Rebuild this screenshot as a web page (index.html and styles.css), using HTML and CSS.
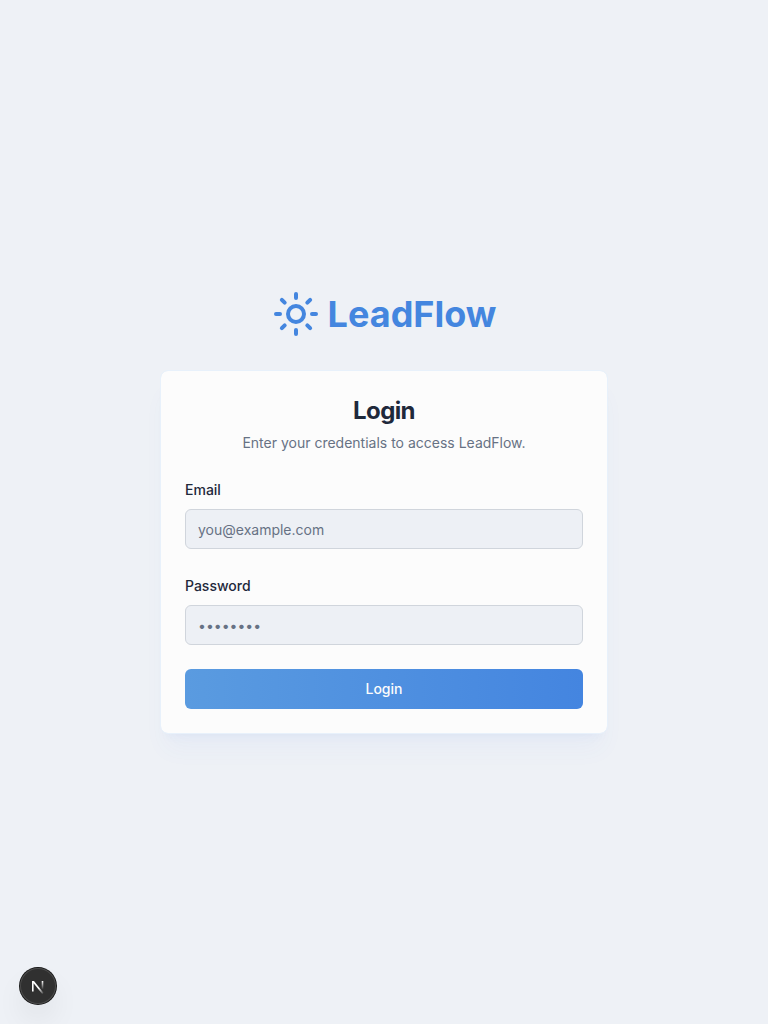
FILE: index.html
```html
<!DOCTYPE html>
<html lang="en">
<head>
<meta charset="utf-8">
<title>LeadFlow</title>
<link rel="stylesheet" href="styles.css">
</head>
<body>
<main class="page">
  <div class="brand">
    <svg class="brand-icon" viewBox="0 0 24 24" fill="none" stroke="currentColor" stroke-width="2" stroke-linecap="round" stroke-linejoin="round"><circle cx="12" cy="12" r="4"/><path d="M12 2v2M12 20v2M4.93 4.93l1.41 1.41M17.66 17.66l1.41 1.41M2 12h2M20 12h2M6.34 17.66l-1.41 1.41M19.07 4.93l-1.41 1.41"/></svg>
    <span class="brand-name">LeadFlow</span>
  </div>
  <section class="card">
    <h1 class="title">Login</h1>
    <p class="subtitle">Enter your credentials to access LeadFlow.</p>
    <form class="form">
      <div class="field"><label class="label" for="email">Email</label><input class="input" id="email" type="email" placeholder="you@example.com"></div>
      <div class="field"><label class="label" for="password">Password</label><input class="input" id="password" type="password" placeholder="••••••••"></div>
      <button class="submit" type="button">Login</button>
    </form>
  </section>
</main>
<div class="dev-badge">
  <svg width="36" height="36" viewBox="2 2 36 36" fill="none">
    <defs>
      <linearGradient id="diag" x1="21" y1="22" x2="26" y2="28" gradientUnits="userSpaceOnUse"><stop stop-color="#fff"/><stop offset="1" stop-color="#fff" stop-opacity="0"/></linearGradient>
      <linearGradient id="stem" x1="25" y1="15" x2="25" y2="23.5" gradientUnits="userSpaceOnUse"><stop stop-color="#fff"/><stop offset="1" stop-color="#fff" stop-opacity="0"/></linearGradient>
    </defs>
    <path d="M14 25.5V15h2l9.6 12-1.4 1-8.6-10.8v8.3z" fill="url(#diag)"/>
    <path d="M24.5 15v8.5" stroke="url(#stem)" stroke-width="1.6"/>
  </svg>
</div>
</body>
</html>
```
FILE: styles.css
```css
* { box-sizing: border-box; }
body { margin: 0; background: #eef1f6; color: #1f293b; font-family: Inter, sans-serif; -webkit-font-smoothing: antialiased; }
.page { min-height: 1024px; display: flex; flex-direction: column; align-items: center; justify-content: center; }
.brand { display: flex; align-items: center; gap: 8px; margin-bottom: 32px; color: #4486df; }
.brand-icon { width: 48px; height: 48px; }
.brand-name { font-size: 36px; line-height: 40px; font-weight: 700; }
.card { width: 448px; padding: 24px; border: 1px solid #e8f1fb; border-radius: 8px; background: #fcfcfc; background-clip: padding-box; box-shadow: 0 20px 25px -5px rgba(59,110,240,.045), 0 8px 10px -6px rgba(59,110,240,.05); }
.title { margin: 0; text-align: center; font-size: 24px; line-height: 32px; font-weight: 700; letter-spacing: -.6px; }
.subtitle { margin: 6px 0 24px; text-align: center; color: #677284; font-size: 14px; line-height: 20px; }
.form { display: flex; flex-direction: column; gap: 24px; }
.field { display: flex; flex-direction: column; gap: 7px; }
.label { padding-top: 1px; font-size: 14px; line-height: 24px; font-weight: 500; }
.input { width: 100%; height: 40px; padding: 8px 12px; border: 1px solid #d0d5dc; border-radius: 6px; background: #edf0f5; font: 14px/20px Inter, sans-serif; }
.input::placeholder { color: #677284; opacity: 1; }
.submit { height: 40px; border: 0; border-radius: 6px; color: #fcfcfc; background: linear-gradient(to right, #5a9be0, #4485e0); font: 500 14px/20px Inter, sans-serif; }
.dev-badge { position: fixed; left: 20px; bottom: 20px; width: 36px; height: 36px; border-radius: 50%; background: #303030; box-shadow: 0 0 0 1px #171717, inset 0 0 0 1px #4b4b4b, 0 16px 32px -8px rgba(0,0,0,.2); }
.dev-badge svg { display: block; }
```
